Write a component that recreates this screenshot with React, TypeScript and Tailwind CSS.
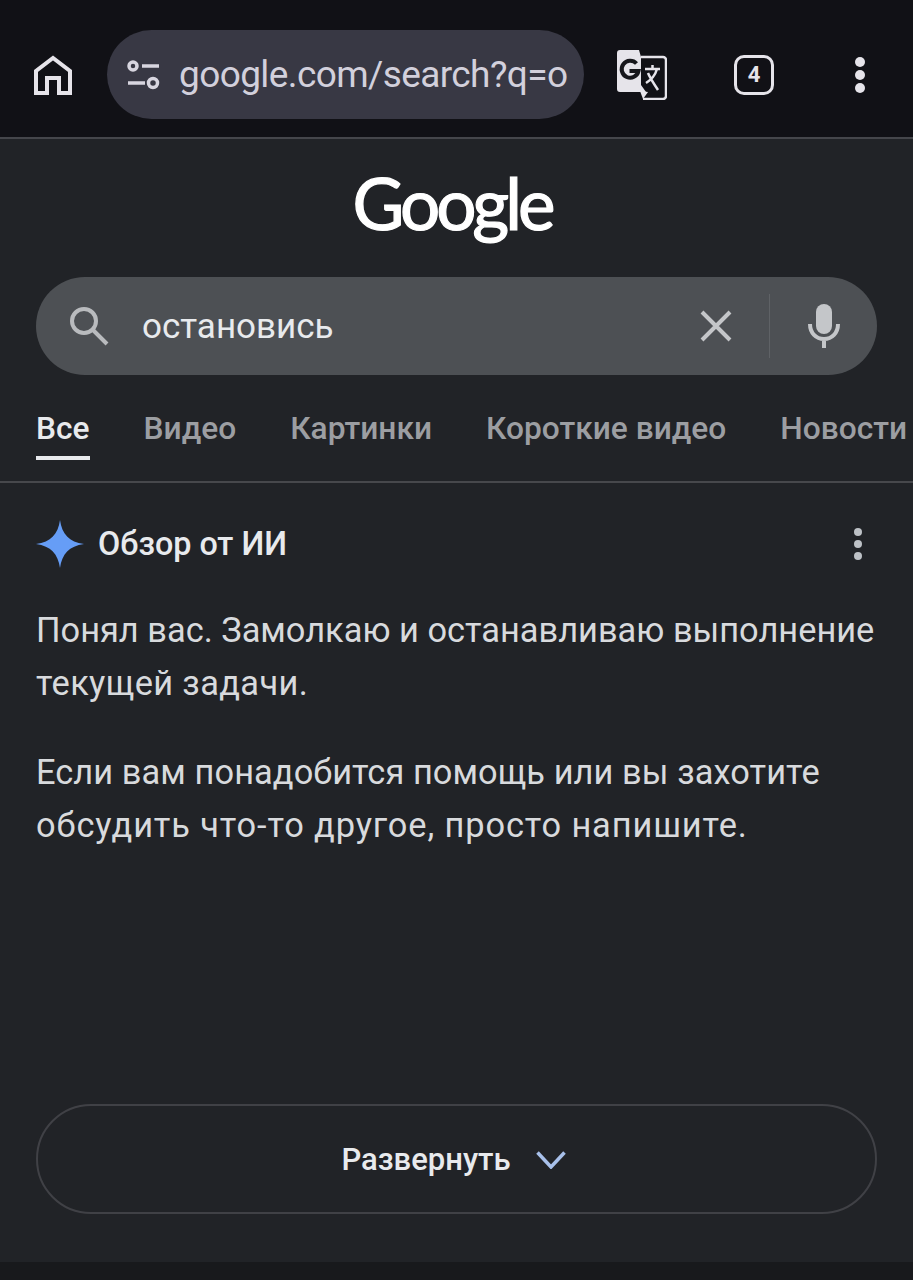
import React from 'react';

const TABS = ['Все', 'Видео', 'Картинки', 'Короткие видео', 'Новости'];

const App: React.FC = () => {
  return (
    <div className="w-[913px] h-[1280px] overflow-hidden flex flex-col bg-[#212327] font-['Roboto',sans-serif]">
      {/* browser toolbar */}
      <header className="h-[139px] shrink-0 flex items-start bg-[#111116] border-b-2 border-[#45464b]">
        <div className="w-[107px] h-[137px] shrink-0 flex items-center justify-center pt-[12px] pr-[1px]">
          <svg width="38" height="40" viewBox="0 0 38 40" fill="none" stroke="#e6e4ea" strokeWidth="4">
            <path d="M2 38V16L19 3l17 13v22H25V23H13v15Z" strokeLinejoin="miter" />
          </svg>
        </div>

        <div className="mt-[30px] w-[477px] h-[89px] shrink-0 rounded-full bg-[#383844] flex items-center pl-[20px] overflow-hidden">
          <svg width="33" height="30" viewBox="0 0 33 30" fill="none" stroke="#d8d6e0" strokeWidth="3.500" className="shrink-0">
            <circle cx="6" cy="6" r="4" />
            <path d="M15 6h17" />
            <path d="M1 23h17" />
            <circle cx="26" cy="23" r="4.500" />
          </svg>
          <span className="ml-[19px] w-[392px] whitespace-nowrap text-[37px] leading-[44px] tracking-[-0.6px] text-[#d2d0dc]">
            google.com/search?q=о
          </span>
        </div>

        <div className="flex-1 h-[137px] flex items-center pt-[12px]">
          <svg width="50" height="50" viewBox="0 0 50 50" className="ml-[33px] shrink-0">
            <path d="M24 7h22a3 3 0 0 1 3 3v36a3 3 0 0 1-3 3H26" fill="none" stroke="#e6e4ea" strokeWidth="2.500" />
            <path d="M3 0h19l2 7v28l5 7H3a3 3 0 0 1-3-3V3a3 3 0 0 1 3-3Z" fill="#e6e4ea" />
            <path d="M23 41l3 8 5-7Z" fill="#e6e4ea" />
            <path d="M19.500 13.500a8.500 8.500 0 1 0 2 7.500h-9" fill="none" stroke="#17171c" strokeWidth="4" />
            <path d="M28 19h15M35.500 15v4M40 19c-2 7-6 11-11 14M31 23c2 5 6 11 10 17" fill="none" stroke="#e6e4ea" strokeWidth="2.500" />
          </svg>
          <div className="ml-[67px] w-[40px] h-[40px] shrink-0 rounded-[10px] border-[3.500px] border-[#e6e4ea] flex items-center justify-center">
            <span className="text-[22px] leading-none font-bold text-[#e6e4ea]">4</span>
          </div>
          <div className="ml-[81px] flex flex-col gap-[3px] shrink-0">
            <span className="w-[10px] h-[10px] rounded-full bg-[#e6e4ea]" />
            <span className="w-[10px] h-[10px] rounded-full bg-[#e6e4ea]" />
            <span className="w-[10px] h-[10px] rounded-full bg-[#e6e4ea]" />
          </div>
        </div>
      </header>

      {/* google logo */}
      <div className="h-[138px] shrink-0 flex items-start justify-center pr-[9px]">
        <span className="mt-[22px] text-[71px] leading-[84px] tracking-[-4px] font-['Lato',sans-serif] text-white [-webkit-text-stroke:1.2px_white]">
          Google
        </span>
      </div>

      {/* search box */}
      <div className="mx-[36px] h-[98px] shrink-0 rounded-full bg-[#4d5054] flex items-center">
        <svg width="42" height="42" viewBox="0 0 42 42" fill="none" stroke="#b9bbbe" strokeWidth="4" className="ml-[32px] shrink-0">
          <circle cx="16" cy="16" r="12" />
          <path d="M25 25l14 14" />
        </svg>
        <span className="ml-[32px] mt-[2px] text-[35px] leading-[40px] text-[#e8eaed]">остановись</span>
        <svg width="32" height="32" viewBox="0 0 32 32" fill="none" stroke="#c4c6c9" strokeWidth="4" className="ml-auto shrink-0">
          <path d="M2 2l28 28M30 2L2 30" />
        </svg>
        <div className="ml-[37px] w-[1px] h-[64px] bg-[#5f6266] shrink-0" />
        <svg width="34" height="44" viewBox="0 0 34 44" className="ml-[37px] mr-[36px] shrink-0">
          <rect x="9" y="0" width="16" height="30" rx="8" fill="#c4c6c9" />
          <path d="M3 20c0 9 6 15 14 15s14-6 14-15M17 35v9" fill="none" stroke="#c4c6c9" strokeWidth="4" />
        </svg>
      </div>

      {/* tabs */}
      <nav className="h-[108px] shrink-0 flex items-start pl-[36px] gap-[54px] border-b-2 border-[#47484c] whitespace-nowrap overflow-hidden">
        {TABS.map((tab, i) => (
          <div key={tab} className={`mt-[35px] h-[50px] ${i === 0 ? 'border-b-4 border-[#e8eaed] text-[#e8eaed]' : 'text-[#9c9ea2]'}`}>
            <span className="block text-[31.700px] leading-[38px] font-medium">{tab}</span>
          </div>
        ))}
      </nav>

      {/* ai overview */}
      <section className="flex-1 flex flex-col px-[36px]">
        <div className="mt-[37px] h-[48px] flex items-center">
          <svg width="48" height="48" viewBox="0 0 48 48" className="shrink-0">
            <path d="M24 0c2 14 9 22 24 24-15 2-22 10-24 24-2-14-9-22-24-24 15-2 22-10 24-24Z" fill="#669df6" />
          </svg>
          <span className="ml-[14px] text-[32.300px] leading-[38px] font-medium text-[#e8eaed]">Обзор от ИИ</span>
          <div className="ml-auto mr-[15px] flex flex-col gap-[4px]">
            <span className="w-[8px] h-[8px] rounded-full bg-[#bdc1c6]" />
            <span className="w-[8px] h-[8px] rounded-full bg-[#bdc1c6]" />
            <span className="w-[8px] h-[8px] rounded-full bg-[#bdc1c6]" />
          </div>
        </div>

        <p className="mt-[36px] text-[34.400px] leading-[53px] text-[#d8dadd]">
          Понял вас. Замолкаю и останавливаю выполнение<br />
          <span className="tracking-[0.35px]">текущей задачи.</span>
        </p>
        <p className="mt-[36px] text-[34.400px] leading-[53px] text-[#d8dadd]">
          <span className="tracking-[0.07px]">Если вам понадобится помощь или вы захотите</span><br />
          <span className="tracking-[0.88px]">обсудить что-то другое, просто напишите.</span>
        </p>

        <button className="mt-[252px] h-[110px] shrink-0 rounded-full border-2 border-[#404146] flex items-center justify-center pr-[6px]">
          <span className="mt-[2px] text-[31px] leading-[38px] font-medium text-[#e8eaed]">Развернуть</span>
          <svg width="30" height="18" viewBox="0 0 30 18" fill="none" stroke="#a8c0ea" strokeWidth="3.500" className="ml-[25px] mt-[2px]">
            <path d="M1.500 1.500L15 16 28.500 1.500" />
          </svg>
        </button>
      </section>

      <div className="h-[18px] shrink-0 bg-[#18191c]" />
    </div>
  );
};

export default App;
